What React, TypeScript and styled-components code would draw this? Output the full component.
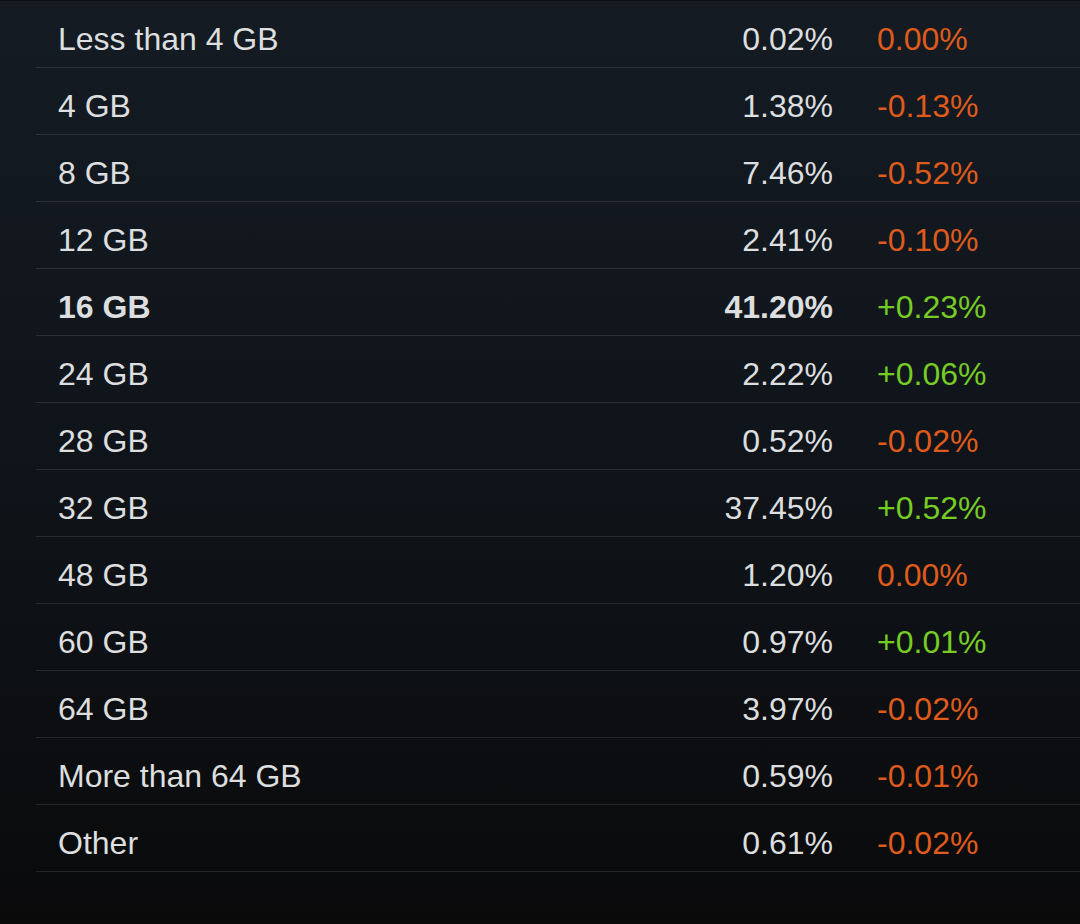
import styled, { createGlobalStyle } from "styled-components"

type Row = { label: string; pct: string; change: string; bold?: boolean }

const rows: Row[] = [
  { label: "Less than 4 GB", pct: "0.02%", change: "0.00%" },
  { label: "4 GB", pct: "1.38%", change: "-0.13%" },
  { label: "8 GB", pct: "7.46%", change: "-0.52%" },
  { label: "12 GB", pct: "2.41%", change: "-0.10%" },
  { label: "16 GB", pct: "41.20%", change: "+0.23%", bold: true },
  { label: "24 GB", pct: "2.22%", change: "+0.06%" },
  { label: "28 GB", pct: "0.52%", change: "-0.02%" },
  { label: "32 GB", pct: "37.45%", change: "+0.52%" },
  { label: "48 GB", pct: "1.20%", change: "0.00%" },
  { label: "60 GB", pct: "0.97%", change: "+0.01%" },
  { label: "64 GB", pct: "3.97%", change: "-0.02%" },
  { label: "More than 64 GB", pct: "0.59%", change: "-0.01%" },
  { label: "Other", pct: "0.61%", change: "-0.02%" },
]

const GlobalStyle = createGlobalStyle`
  html, body {
    margin: 0;
    padding: 0;
    background: #0a0a0b;
  }
  body {
    font-family: "Liberation Sans", Arial, sans-serif;
  }
`

export default function App() {
  return (
    <Page>
      <GlobalStyle />
      <Table>
        {rows.map((r) => (
          <StatRow key={r.label} $bold={r.bold}>
            <Label>{r.label}</Label>
            <Pct>{r.pct}</Pct>
            <Change $up={r.change.startsWith("+")}>{r.change}</Change>
          </StatRow>
        ))}
      </Table>
    </Page>
  )
}

const Page = styled.div`
  min-height: 923px;
  border-top: 1px solid #0b0e12;
  background: linear-gradient(to bottom, #141b23 0%, #10151b 45%, #0a0a0b 100%);
  padding-left: 36px;
`
const Table = styled.div`
  display: flex;
  flex-direction: column;
`
const StatRow = styled.div<{ $bold?: boolean }>`
  display: grid;
  grid-template-columns: 1fr auto 203px;
  padding: 20px 0 10px;
  line-height: 36px;
  font-size: 32px;
  font-weight: ${(p) => (p.$bold ? 700 : 400)};
  border-bottom: 1px solid rgba(255, 255, 255, 0.11);
  color: #dcdedf;
`
const Label = styled.div`
  padding-left: 22px;
  white-space: nowrap;
`
const Pct = styled.div`
  text-align: right;
  padding-right: 44px;
`
const Change = styled.div<{ $up: boolean }>`
  font-weight: 400;
  color: ${(p) => (p.$up ? "#76cb25" : "#de5b1c")};
`
